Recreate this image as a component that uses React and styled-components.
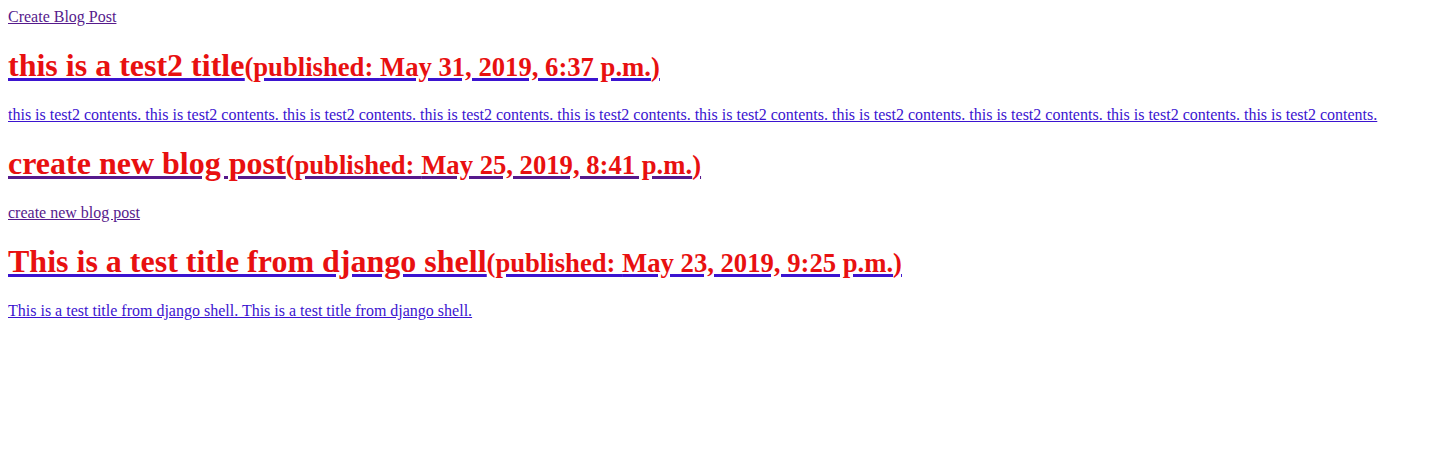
import React from "react";
import styled, { createGlobalStyle } from "styled-components";

const Global = createGlobalStyle`
  body {
    margin: 8px;
    font-family: "Liberation Serif", "Times New Roman", serif;
    font-size: 16px;
    background: #ffffff;
  }
`;

const NavLink = styled.a`
  color: ${(p) => (p.$visited ? "#561a8c" : "#3b14d0")};
  text-decoration: underline;
  font-size: 16px;
`;

const PostLink = styled.a`
  color: ${(p) => (p.$visited ? "#561a8c" : "#3b14d0")};
  text-decoration: underline;
  display: block;
`;

const Title = styled.h1`
  color: #e81010;
  font-size: 32px;
  font-weight: bold;
  margin: 21.44px 0;
`;

const Published = styled.small`
  font-size: 26.67px;
`;

const Body = styled.p`
  margin: 16px 0;
  font-size: 16px;
`;

const posts = [
  {
    title: "this is a test2 title",
    date: "May 31, 2019, 6:37 p.m.",
    text: Array(10).fill("this is test2 contents.").join(" "),
    visited: false,
  },
  {
    title: "create new blog post",
    date: "May 25, 2019, 8:41 p.m.",
    text: "create new blog post",
    visited: true,
  },
  {
    title: "This is a test title from django shell",
    date: "May 23, 2019, 9:25 p.m.",
    text: "This is a test title from django shell. This is a test title from django shell.",
    visited: false,
  },
];

export default function App() {
  return (
    <>
      <Global />
      <NavLink href="#" $visited>
        Create Blog Post
      </NavLink>
      {posts.map((p) => (
        <React.Fragment key={p.title}>
          <PostLink href="#" $visited={p.visited}>
            <Title>
              {p.title}
              <Published>(published: {p.date})</Published>
            </Title>
          </PostLink>
          <PostLink href="#" $visited={p.visited}>
            <Body>{p.text}</Body>
          </PostLink>
        </React.Fragment>
      ))}
    </>
  );
}
